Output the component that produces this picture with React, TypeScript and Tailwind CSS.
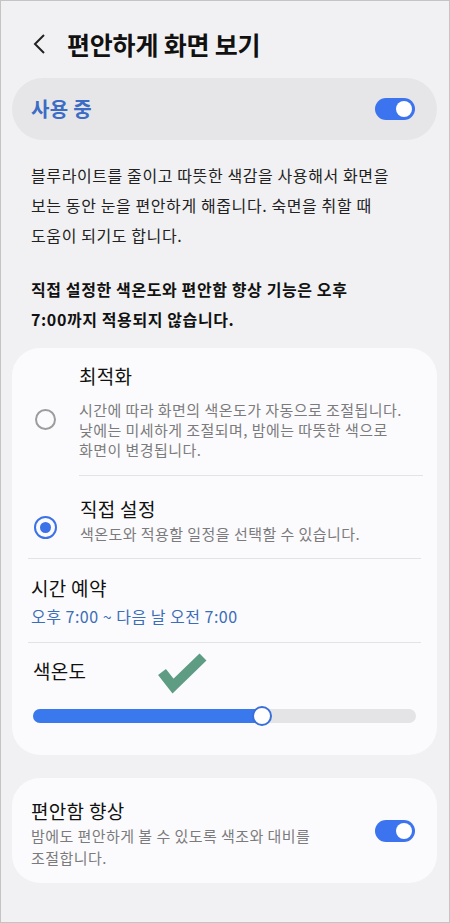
import React from "react";

const font = { fontFamily: '"Noto Sans CJK KR", "Noto Sans", sans-serif' };

function Toggle() {
  return (
    <div className="relative w-[40px] h-[22px] rounded-full bg-[#3b74ee] shrink-0">
      <div className="absolute right-[3px] top-[3px] w-[16px] h-[16px] rounded-full bg-white" />
    </div>
  );
}

export default function App() {
  return (
    <div
      style={font}
      className="w-[450px] h-[923px] border border-[#c4c4c4] bg-[#f1f1f3] overflow-hidden text-[#111]"
    >
      {/* Header */}
      <div className="flex items-center h-[46px] mt-[20px] mb-[11px] pl-[31px]">
        <svg width="16" height="24" viewBox="0 0 16 24" className="shrink-0">
          <polyline points="12,3 3,12 12,21" fill="none" stroke="#222" strokeWidth="2" strokeLinejoin="miter" />
        </svg>
        <div className="ml-[19px] text-[25px] font-bold tracking-[-0.2px] leading-none">편안하게 화면 보기</div>
      </div>

      {/* Using pill */}
      <div className="ml-[11px] mr-[12px] h-[62px] rounded-full bg-[#e6e6e8] flex items-center justify-between pl-[19px] pr-[22px]">
        <div className="text-[20px] font-bold tracking-[0.3px] text-[#3c6cc4]">사용 중</div>
        <Toggle />
      </div>

      {/* Description */}
      <div className="px-[30px] mt-[20px] text-[16px] tracking-[0.6px] leading-[30px] text-[#222]">
        블루라이트를 줄이고 따뜻한 색감을 사용해서 화면을
        <br />
        보는 동안 눈을 편안하게 해줍니다. 숙면을 취할 때
        <br />
        도움이 되기도 합니다.
      </div>
      <div className="px-[30px] mt-[24px] text-[16px] tracking-[0.6px] leading-[30px] font-bold text-[#111]">
        직접 설정한 색온도와 편안함 향상 기능은 오후
        <br />
        7:00까지 적용되지 않습니다.
      </div>

      {/* Card 1 */}
      <div className="ml-[11px] mr-[12px] mt-[14px] h-[407px] rounded-[28px] bg-[#fbfbfd] flex flex-col">
        {/* Option 1 */}
        <div className="flex items-center pl-[23px] pr-[14px] pt-[15px]">
          <div className="w-[21px] h-[21px] rounded-full border-2 border-[#9c9c9c] shrink-0" />
          <div className="ml-[23px] flex-1 border-b border-[#e3e3e6] pb-[15px]">
            <div className="text-[19px] tracking-[0.3px] leading-[26px]">최적화</div>
            <div className="mt-[11px] text-[15px] tracking-[0.45px] leading-[20px] text-[#7b7b7d]">
              시간에 따라 화면의 색온도가 자동으로 조절됩니다.
              <br />
              낮에는 미세하게 조절되며, 밤에는 따뜻한 색으로
              <br />
              화면이 변경됩니다.
            </div>
          </div>
        </div>
        {/* Option 2 */}
        <div className="flex items-center pl-[22px] pr-[14px] pt-[20px]">
          <div className="w-[23px] h-[23px] rounded-full border-[2.5px] border-[#3b72e8] flex items-center justify-center shrink-0">
            <div className="w-[11px] h-[11px] rounded-full bg-[#3b72e8]" />
          </div>
          <div className="ml-[23px] flex-1 pb-[14px]">
            <div className="text-[19px] tracking-[0.3px] leading-[26px]">직접 설정</div>
            <div className="mt-[2px] text-[15px] tracking-[0.45px] leading-[20px] text-[#7b7b7d]">
              색온도와 적용할 일정을 선택할 수 있습니다.
            </div>
          </div>
        </div>
        <div className="mx-[16px] border-t border-[#e3e3e6]" />
        {/* Schedule */}
        <div className="px-[19px] pt-[16px] pb-[15px]">
          <div className="text-[19px] tracking-[0.3px] leading-[26px]">시간 예약</div>
          <div className="mt-[4px] text-[16px] tracking-[0.5px] leading-[22px] text-[#3c6db8]">오후 7:00 ~ 다음 날 오전 7:00</div>
        </div>
        <div className="mx-[16px] border-t border-[#e3e3e6]" />
        {/* Color temperature */}
        <div className="relative px-[21px] pt-[15px]">
          <div className="text-[19px] tracking-[0.3px] leading-[26px]">색온도</div>
          <svg
            width="56"
            height="46"
            viewBox="0 0 56 46"
            className="absolute left-[143px] top-[8px]"
          >
            <polyline points="7,21 18,35 48,6" fill="none" stroke="#5f9c84" strokeWidth="10" strokeLinejoin="miter" strokeLinecap="butt" />
          </svg>
          <div className="relative mt-[25px] h-[14px] rounded-full bg-[#e4e4e6]">
            <div className="absolute left-0 top-0 h-[14px] w-[229px] rounded-full bg-[#3a78ee]" />
            <div className="absolute left-[219px] top-[-3px] w-[20px] h-[20px] rounded-full bg-white border-2 border-[#3a6fd8]" />
          </div>
        </div>
      </div>

      {/* Card 2 */}
      <div className="ml-[11px] mr-[12px] mt-[23px] h-[105px] rounded-[28px] bg-[#fbfbfd] flex items-center justify-between pl-[19px] pr-[22px]">
        <div className="self-start pt-[20px]">
          <div className="text-[19px] tracking-[0.3px] leading-[26px]">편안함 향상</div>
          <div className="mt-[1px] text-[15px] tracking-[0.45px] leading-[22px] text-[#7b7b7d]">
            밤에도 편안하게 볼 수 있도록 색조와 대비를
            <br />
            조절합니다.
          </div>
        </div>
        <Toggle />
      </div>
    </div>
  );
}
